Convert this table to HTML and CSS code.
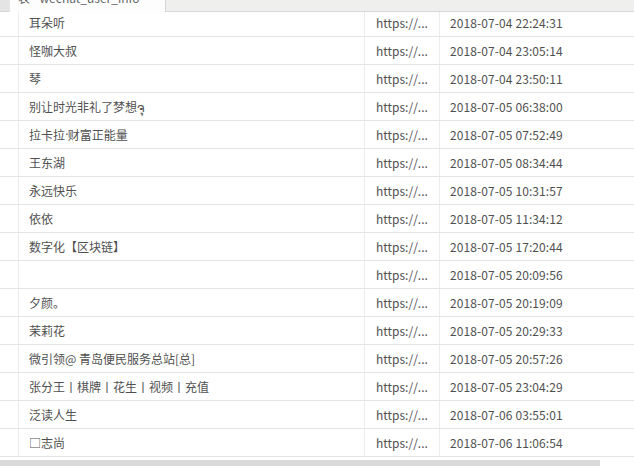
FILE: index.html
```html
<!DOCTYPE html>
<html>
<head>
<meta charset="utf-8">
<link rel="stylesheet" href="styles.css">
</head>
<body>
<div class="win">
  <div class="tabbar">
    <div class="edge"></div>
    <div class="tab"><span class="tab-label">表 - wechat_user_info</span></div>
    <div class="tab-rest"></div>
  </div>
  <div class="grid">
    <div class="row first"><div class="c0"></div><div class="c1">耳朵听</div><div class="c2">https://...</div><div class="c3">2018-07-04 22:24:31</div></div>
    <div class="row"><div class="c0"></div><div class="c1">怪咖大叔</div><div class="c2">https://...</div><div class="c3">2018-07-04 23:05:14</div></div>
    <div class="row"><div class="c0"></div><div class="c1">琴</div><div class="c2">https://...</div><div class="c3">2018-07-04 23:50:11</div></div>
    <div class="row"><div class="c0"></div><div class="c1">别让时光非礼了梦想ຈຸ</div><div class="c2">https://...</div><div class="c3">2018-07-05 06:38:00</div></div>
    <div class="row"><div class="c0"></div><div class="c1">拉卡拉<span class="dot">·</span>财富正能量</div><div class="c2">https://...</div><div class="c3">2018-07-05 07:52:49</div></div>
    <div class="row"><div class="c0"></div><div class="c1">王东湖</div><div class="c2">https://...</div><div class="c3">2018-07-05 08:34:44</div></div>
    <div class="row"><div class="c0"></div><div class="c1">永远快乐</div><div class="c2">https://...</div><div class="c3">2018-07-05 10:31:57</div></div>
    <div class="row"><div class="c0"></div><div class="c1">依依</div><div class="c2">https://...</div><div class="c3">2018-07-05 11:34:12</div></div>
    <div class="row"><div class="c0"></div><div class="c1">数字化【区块链】</div><div class="c2">https://...</div><div class="c3">2018-07-05 17:20:44</div></div>
    <div class="row"><div class="c0"></div><div class="c1"></div><div class="c2">https://...</div><div class="c3">2018-07-05 20:09:56</div></div>
    <div class="row"><div class="c0"></div><div class="c1">夕颜。</div><div class="c2">https://...</div><div class="c3">2018-07-05 20:19:09</div></div>
    <div class="row"><div class="c0"></div><div class="c1">茉莉花</div><div class="c2">https://...</div><div class="c3">2018-07-05 20:29:33</div></div>
    <div class="row"><div class="c0"></div><div class="c1">微引领@ 青岛便民服务总站[总]</div><div class="c2">https://...</div><div class="c3">2018-07-05 20:57:26</div></div>
    <div class="row"><div class="c0"></div><div class="c1">张分王丨棋牌丨花生丨视频丨充值</div><div class="c2">https://...</div><div class="c3">2018-07-05 23:04:29</div></div>
    <div class="row"><div class="c0"></div><div class="c1">泛读人生</div><div class="c2">https://...</div><div class="c3">2018-07-06 03:55:01</div></div>
    <div class="row"><div class="c0"></div><div class="c1">□志尚</div><div class="c2">https://...</div><div class="c3">2018-07-06 11:06:54</div></div>
  </div>
  <div class="hscroll"><div class="thumb"></div></div>
</div>
</body>
</html>
```
FILE: styles.css
```css
html, body {
  margin: 0;
  padding: 0;
  background: #ffffff;
}
.win {
  width: 634px;
  height: 466px;
  overflow: hidden;
  display: flex;
  flex-direction: column;
  font-family: "Noto Sans CJK SC", "Noto Sans", sans-serif;
  font-size: 12px;
  color: #505050;
}
.tabbar {
  height: 12px;
  display: flex;
  flex: none;
}
.edge {
  width: 9px;
  background: #e4e4e4;
  border-bottom: 1px solid #d8d8d8;
  box-sizing: border-box;
}
.tab {
  width: 157px;
  background: #fdfdfd;
  border-right: 1px solid #d6d6d6;
  border-left: 1px solid #e6e6e6;
  box-sizing: border-box;
  overflow: hidden;
  position: relative;
}
.tab-label {
  position: absolute;
  left: 8px;
  top: -9px;
  font-size: 12px;
  line-height: 14px;
  color: #666;
  white-space: nowrap;
}
.tab-rest {
  flex: 1;
  background: #efefee;
  border-bottom: 1px solid #d9d9d9;
  box-sizing: border-box;
}
.grid {
  flex: none;
  display: flex;
  flex-direction: column;
}
.row {
  display: grid;
  grid-template-columns: 19px 346px 75px 1fr;
  height: 28px;
  border-bottom: 1px solid #e4e4e4;
  box-sizing: border-box;
}
.row.first {
  height: 25px;
}
.row > div {
  border-right: 1px solid #ececec;
  display: flex;
  align-items: center;
  white-space: nowrap;
  overflow: hidden;
  line-height: 16px;
}
.row > .c3 {
  border-right: none;
}
.row.first > div {
  padding-bottom: 3px;
}
.dot {
  font-family: "DejaVu Sans", sans-serif;
  letter-spacing: -1px;
}
.c1 {
  padding-left: 10px;
}
.c2 {
  padding-left: 11px;
}
.c3 {
  padding-left: 10px;
  letter-spacing: 0.1px;
}
.hscroll {
  flex: 1;
  display: flex;
  align-items: flex-end;
  background: #ffffff;
}
.thumb {
  width: 600px;
  height: 6px;
  background: #dadada;
}
```
